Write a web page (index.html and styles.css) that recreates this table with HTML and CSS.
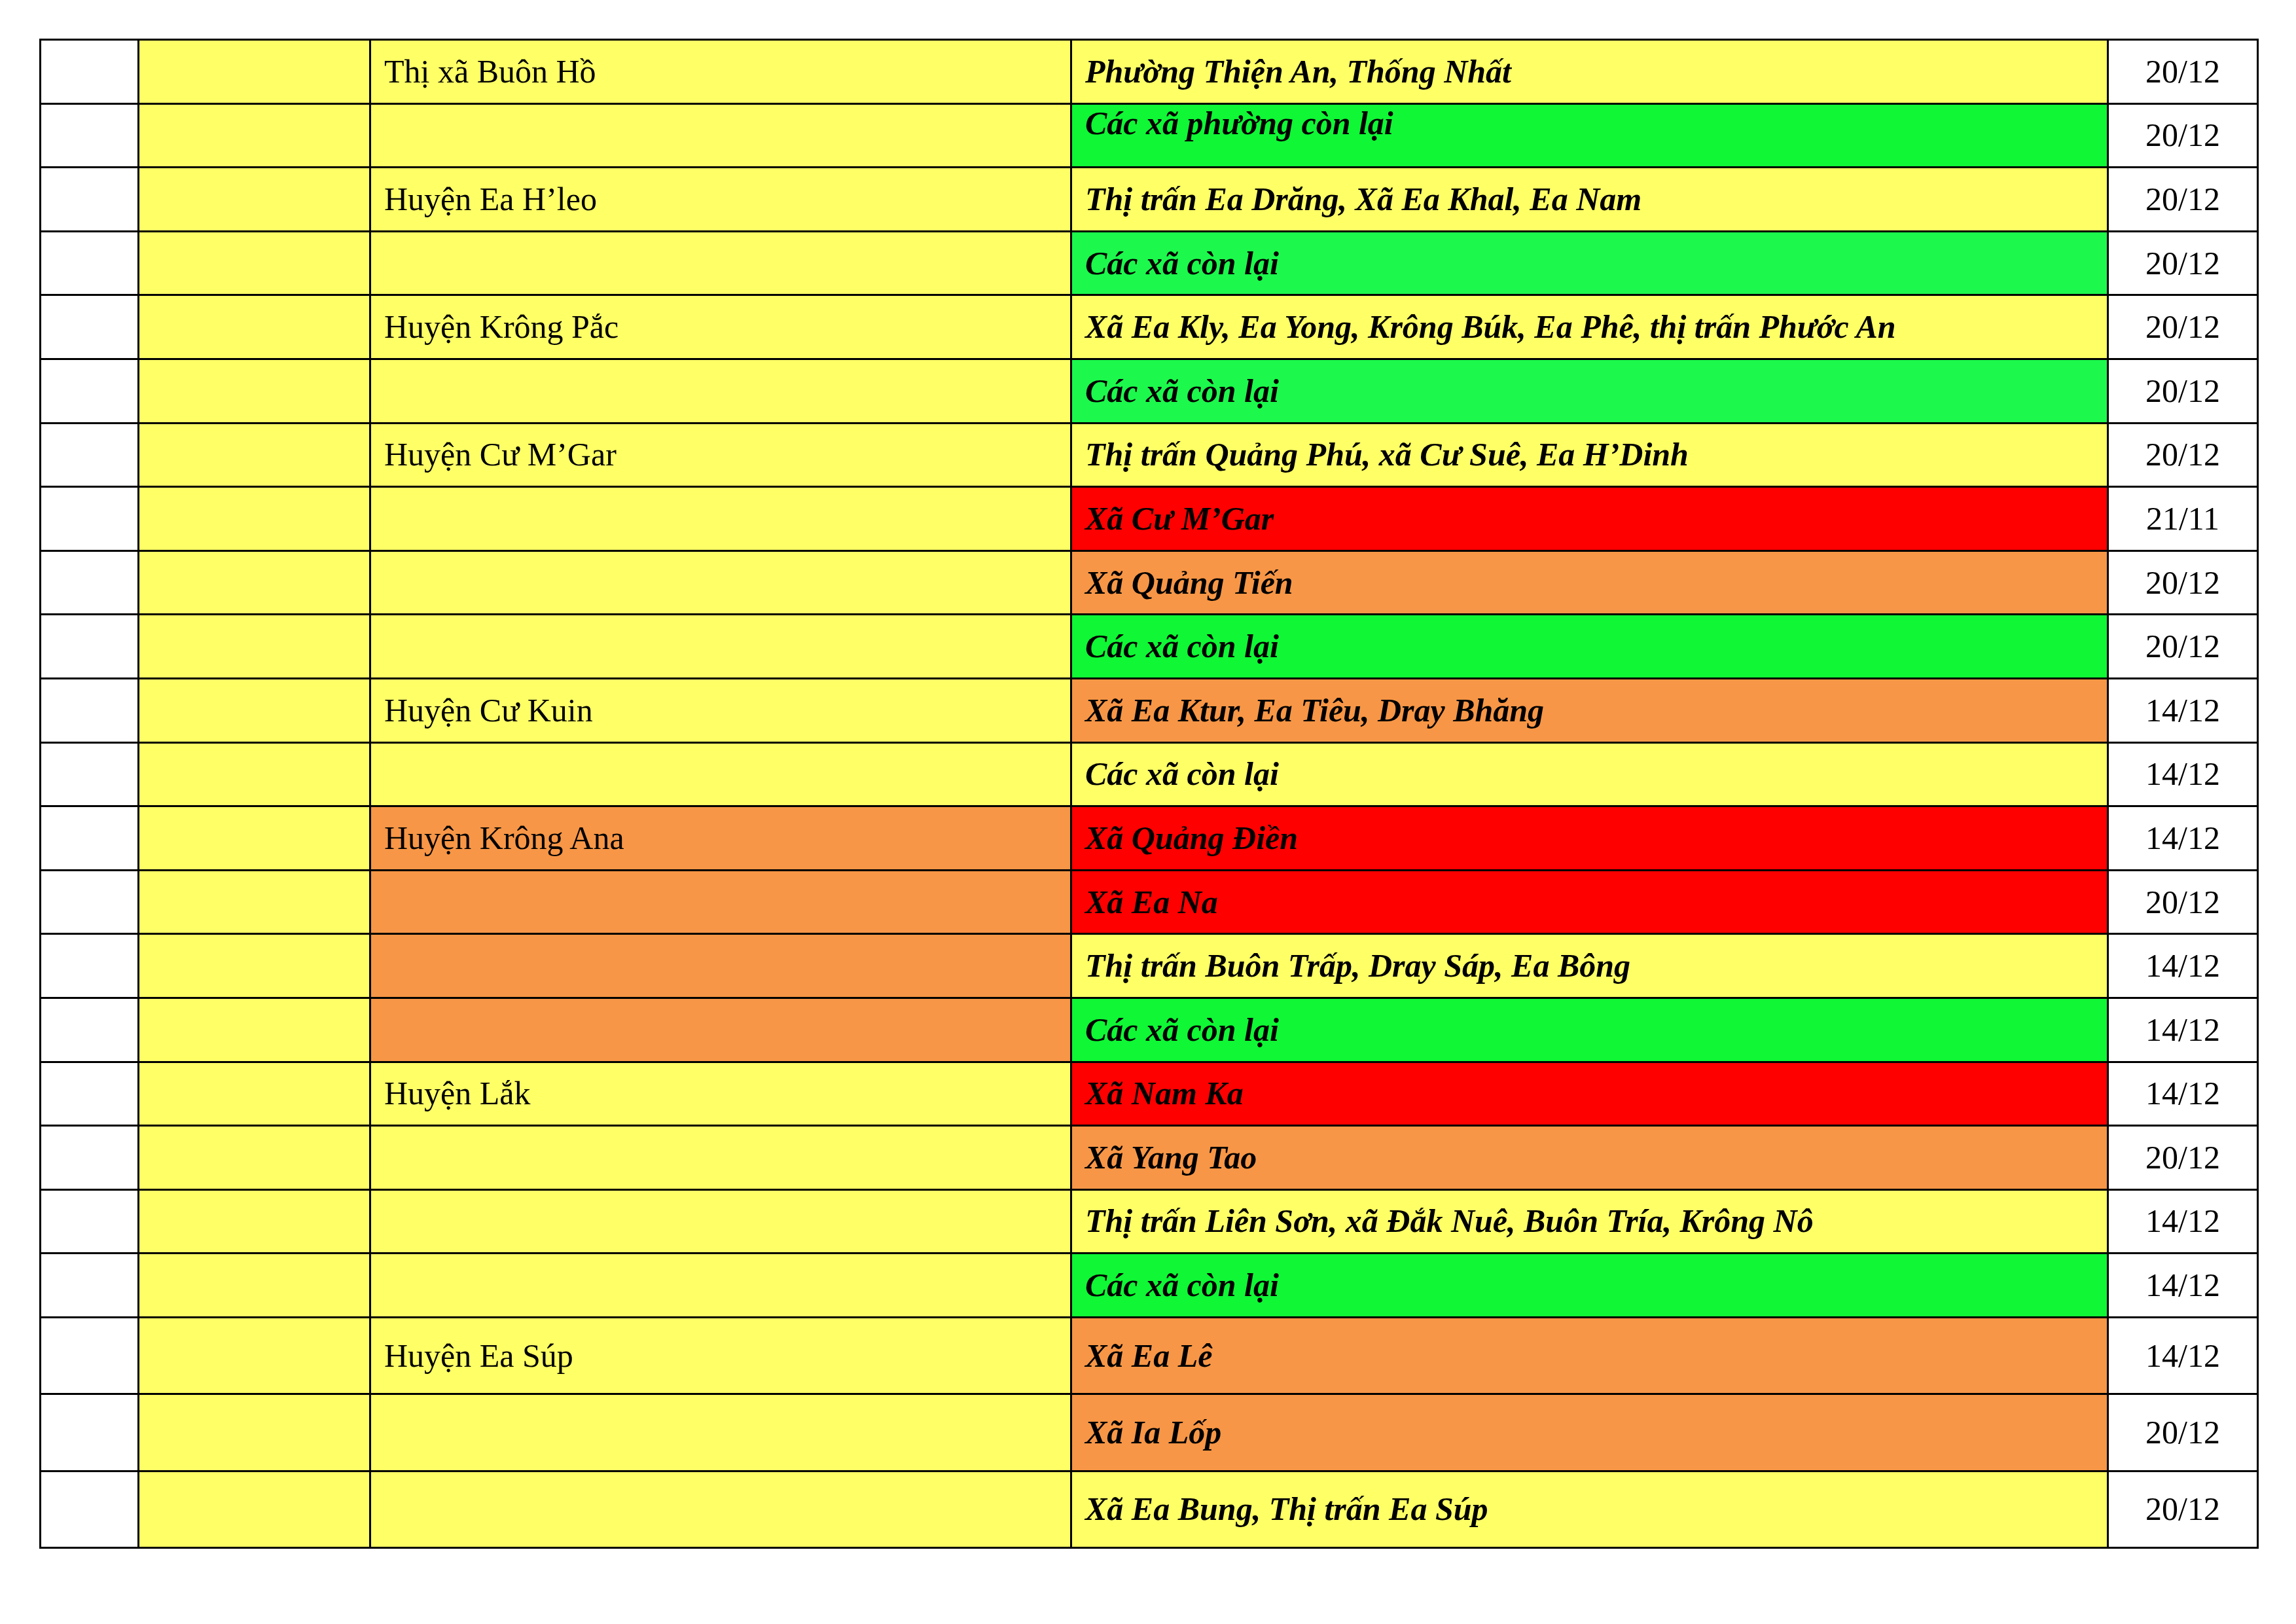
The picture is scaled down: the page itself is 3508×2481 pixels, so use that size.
FILE: index.html
```html
<!DOCTYPE html>
<html lang="vi">
<head>
<meta charset="utf-8">
<title>Bảng</title>
<link rel="stylesheet" href="styles.css">
</head>
<body>
<table class="grid">
  <colgroup>
    <col class="c1"><col class="c2"><col class="c3"><col class="c4"><col class="c5">
  </colgroup>
  <tbody>
    <tr><td class="w"></td><td class="y"></td><td class="y name">Thị xã Buôn Hồ</td><td class="y area">Phường Thiện An, Thống Nhất</td><td class="w date">20/12</td></tr>
    <tr><td class="w"></td><td class="y"></td><td class="y name"></td><td class="g area top">Các xã phường còn lại</td><td class="w date">20/12</td></tr>
    <tr><td class="w"></td><td class="y"></td><td class="y name">Huyện Ea H’leo</td><td class="y area">Thị trấn Ea Drăng, Xã Ea Khal, Ea Nam</td><td class="w date">20/12</td></tr>
    <tr><td class="w"></td><td class="y"></td><td class="y name"></td><td class="g2 area">Các xã còn lại</td><td class="w date">20/12</td></tr>
    <tr><td class="w"></td><td class="y"></td><td class="y name">Huyện Krông Pắc</td><td class="y area">Xã Ea Kly, Ea Yong, Krông Búk, Ea Phê, thị trấn Phước An</td><td class="w date">20/12</td></tr>
    <tr><td class="w"></td><td class="y"></td><td class="y name"></td><td class="g2 area">Các xã còn lại</td><td class="w date">20/12</td></tr>
    <tr><td class="w"></td><td class="y"></td><td class="y name">Huyện Cư M’Gar</td><td class="y area">Thị trấn Quảng Phú, xã Cư Suê, Ea H’Dinh</td><td class="w date">20/12</td></tr>
    <tr><td class="w"></td><td class="y"></td><td class="y name"></td><td class="r area">Xã Cư M’Gar</td><td class="w date">21/11</td></tr>
    <tr><td class="w"></td><td class="y"></td><td class="y name"></td><td class="o area">Xã Quảng Tiến</td><td class="w date">20/12</td></tr>
    <tr><td class="w"></td><td class="y"></td><td class="y name"></td><td class="g area">Các xã còn lại</td><td class="w date">20/12</td></tr>
    <tr><td class="w"></td><td class="y"></td><td class="y name">Huyện Cư Kuin</td><td class="o area">Xã Ea Ktur, Ea Tiêu, Dray Bhăng</td><td class="w date">14/12</td></tr>
    <tr><td class="w"></td><td class="y"></td><td class="y name"></td><td class="y area">Các xã còn lại</td><td class="w date">14/12</td></tr>
    <tr><td class="w"></td><td class="y"></td><td class="o name">Huyện Krông Ana</td><td class="r area">Xã Quảng Điền</td><td class="w date">14/12</td></tr>
    <tr><td class="w"></td><td class="y"></td><td class="o name"></td><td class="r area">Xã Ea Na</td><td class="w date">20/12</td></tr>
    <tr><td class="w"></td><td class="y"></td><td class="o name"></td><td class="y area">Thị trấn Buôn Trấp, Dray Sáp, Ea Bông</td><td class="w date">14/12</td></tr>
    <tr><td class="w"></td><td class="y"></td><td class="o name"></td><td class="g area">Các xã còn lại</td><td class="w date">14/12</td></tr>
    <tr><td class="w"></td><td class="y"></td><td class="y name">Huyện Lắk</td><td class="r area">Xã Nam Ka</td><td class="w date">14/12</td></tr>
    <tr><td class="w"></td><td class="y"></td><td class="y name"></td><td class="o area">Xã Yang Tao</td><td class="w date">20/12</td></tr>
    <tr><td class="w"></td><td class="y"></td><td class="y name"></td><td class="y area">Thị trấn Liên Sơn, xã Đắk Nuê, Buôn Tría, Krông Nô</td><td class="w date">14/12</td></tr>
    <tr><td class="w"></td><td class="y"></td><td class="y name"></td><td class="g area">Các xã còn lại</td><td class="w date">14/12</td></tr>
    <tr class="tall"><td class="w"></td><td class="y"></td><td class="y name">Huyện Ea Súp</td><td class="o area">Xã Ea Lê</td><td class="w date">14/12</td></tr>
    <tr class="tall"><td class="w"></td><td class="y"></td><td class="y name"></td><td class="o area">Xã Ia Lốp</td><td class="w date">20/12</td></tr>
    <tr class="tall"><td class="w"></td><td class="y"></td><td class="y name"></td><td class="y area">Xã Ea Bung, Thị trấn Ea Súp</td><td class="w date">20/12</td></tr>
  </tbody>
</table>
</body>
</html>
```
FILE: styles.css
```css
html, body {
  margin: 0;
  padding: 0;
  background: #ffffff;
}

body {
  padding: 59px 0 0 60px;
  font-family: "Liberation Serif", "Times New Roman", serif;
  font-size: 50px;
  color: #000;
}

.grid {
  border-collapse: collapse;
  table-layout: fixed;
  width: 3388px;
}

.c1 { width: 150px; }
.c2 { width: 354px; }
.c3 { width: 1071px; }
.c4 { width: 1584px; }
.c5 { width: 229px; }

.grid tr {
  height: 97.6px;
}

.grid tr.tall {
  height: 117.4px;
}

.grid td {
  border: 3px solid #000;
  padding: 0 20px;
  vertical-align: middle;
  line-height: 57px;
  white-space: nowrap;
  overflow: hidden;
}

.name {
  padding-left: 22px;
}

.area {
  font-weight: bold;
  font-style: italic;
}

.area.top {
  vertical-align: top;
}

.date {
  text-align: center;
}

.w { background: #ffffff; }
.y { background: #ffff66; }
.g { background: #0ff735; }
.g2 { background: #1cf94c; }
.o { background: #f79646; }
.r { background: #ff0000; }
```
